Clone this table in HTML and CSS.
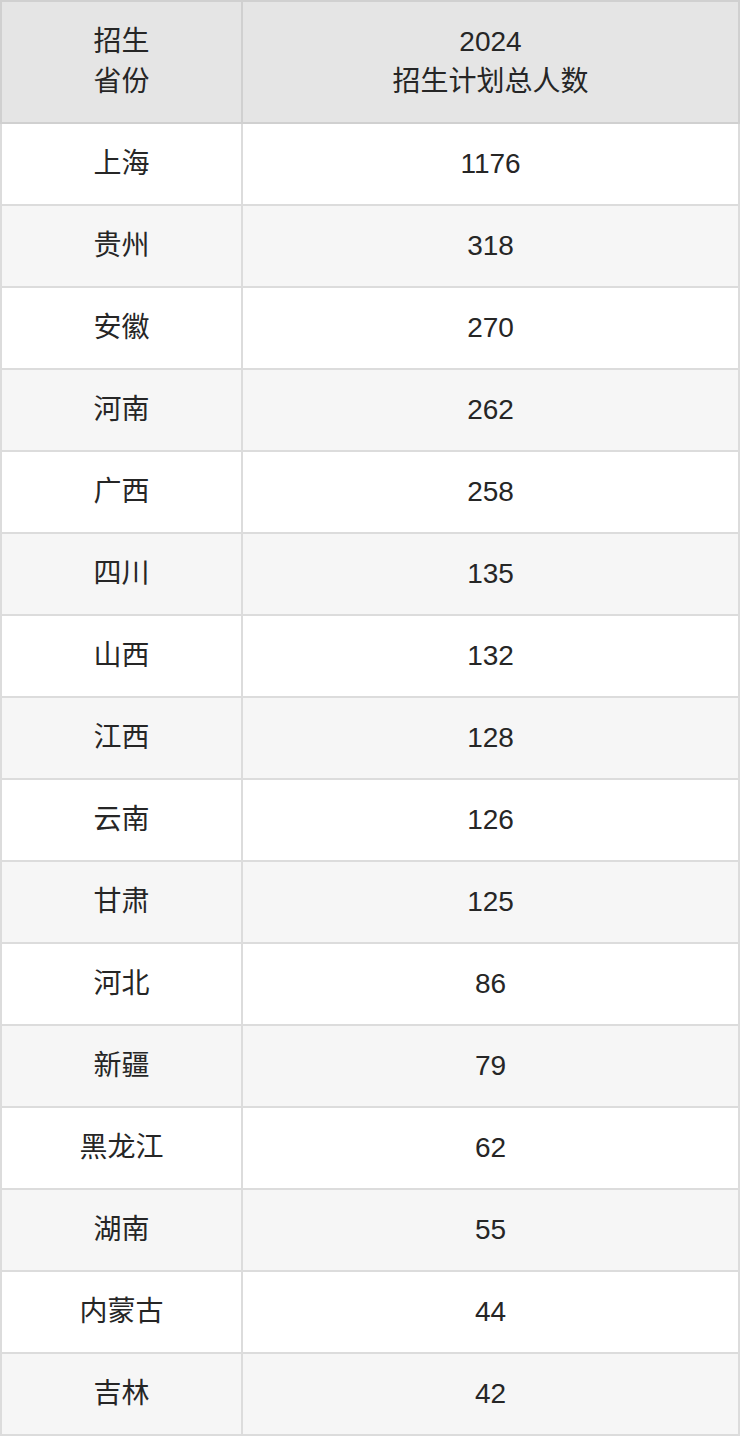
FILE: index.html
```html
<!DOCTYPE html>
<html lang="zh-CN">
<head>
<meta charset="utf-8">
<link rel="stylesheet" href="styles.css">
</head>
<body>
<table class="plan">
  <thead>
    <tr><th class="c1">招生<br>省份</th><th class="c2">2024<br>招生计划总人数</th></tr>
  </thead>
  <tbody>
    <tr><td>上海</td><td>1176</td></tr>
    <tr><td>贵州</td><td>318</td></tr>
    <tr><td>安徽</td><td>270</td></tr>
    <tr><td>河南</td><td>262</td></tr>
    <tr><td>广西</td><td>258</td></tr>
    <tr><td>四川</td><td>135</td></tr>
    <tr><td>山西</td><td>132</td></tr>
    <tr><td>江西</td><td>128</td></tr>
    <tr><td>云南</td><td>126</td></tr>
    <tr><td>甘肃</td><td>125</td></tr>
    <tr><td>河北</td><td>86</td></tr>
    <tr><td>新疆</td><td>79</td></tr>
    <tr><td>黑龙江</td><td>62</td></tr>
    <tr><td>湖南</td><td>55</td></tr>
    <tr><td>内蒙古</td><td>44</td></tr>
    <tr><td>吉林</td><td>42</td></tr>
  </tbody>
</table>
</body>
</html>
```
FILE: styles.css
```css
html, body {
  margin: 0;
  padding: 0;
  background: #ffffff;
}
.plan {
  width: 740px;
  border-collapse: collapse;
  table-layout: fixed;
  font-family: "Liberation Sans", "Noto Sans CJK SC", sans-serif;
  font-size: 28px;
  color: #262626;
}
.plan th, .plan td {
  border: 2px solid #dcdcdc;
  text-align: center;
  vertical-align: middle;
  padding: 0;
  font-weight: normal;
}
.plan th {
  background: #e5e5e5;
  border-color: #d0d0d0;
  height: 120px;
  line-height: 40px;
}
.plan td {
  height: 80px;
  line-height: 40px;
}
.plan .c1 { width: 239px; }
.plan tbody tr:nth-child(even) td { background: #f6f6f6; }
```
